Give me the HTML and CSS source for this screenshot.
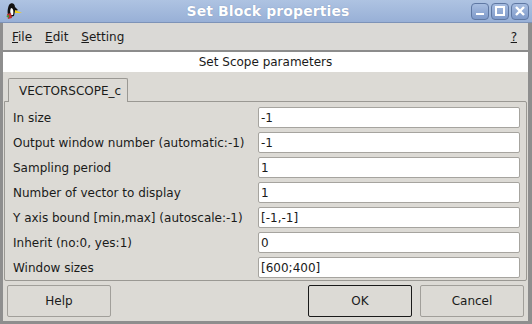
FILE: index.html
```html
<!DOCTYPE html>
<html lang="en">
<head>
    <meta charset="UTF-8">
    <title>Set Block properties</title>
    <link rel="stylesheet" href="styles.css">
</head>
<body>
    <div class="window">
        <div class="titlebar">
            <svg class="app-icon" width="20" height="18" viewBox="0 0 20 18">
                <path d="M6 3 C8 0 12 1 12 5 L15 8 L12 9 L11 14 L7 15 C4 13 4 8 6 3 Z" fill="#111"/>
                <path d="M8 6 C10 6 11 9 10 13 L8 13 C7 10 7 8 8 6 Z" fill="#fff"/>
                <path d="M12 8 L19 11 L12 11 Z" fill="#f0d020"/>
                <path d="M4 12 L8 11 L9 16 L5 17 Z" fill="#c03030"/>
                <path d="M3 14 L6 13 L6 16 Z" fill="#3a9a3a"/>
            </svg>
            <span class="title">Set Block properties</span>
            <div class="wm-buttons">
                <span class="wm-btn"><svg width="12" height="12" viewBox="0 0 12 12"><rect x="2" y="8" width="8" height="2" fill="#fff"/></svg></span>
                <span class="wm-btn"><svg width="12" height="12" viewBox="0 0 12 12"><rect x="2" y="2" width="8" height="8" fill="none" stroke="#fff" stroke-width="2"/></svg></span>
                <span class="wm-btn"><svg width="12" height="12" viewBox="0 0 12 12"><path d="M2 2 L10 10 M10 2 L2 10" stroke="#fff" stroke-width="2.4"/></svg></span>
            </div>
        </div>

        <div class="frame">
            <div class="menubar">
                <span class="menu"><u>F</u>ile</span>
                <span class="menu"><u>E</u>dit</span>
                <span class="menu"><u>S</u>etting</span>
                <span class="menu help"><u>?</u></span>
            </div>

            <div class="heading">Set Scope parameters</div>

            <div class="content">
                <div class="tabs">
                    <span class="tab">VECTORSCOPE_c</span>
                </div>
                <div class="panel">
                    <div class="row">
                        <label>In size</label>
                        <input type="text" value="-1">
                    </div>
                    <div class="row">
                        <label>Output window number (automatic:-1)</label>
                        <input type="text" value="-1">
                    </div>
                    <div class="row">
                        <label>Sampling period</label>
                        <input type="text" value="1">
                    </div>
                    <div class="row">
                        <label>Number of vector to display</label>
                        <input type="text" value="1">
                    </div>
                    <div class="row">
                        <label>Y axis bound [min,max] (autoscale:-1)</label>
                        <input type="text" value="[-1,-1]">
                    </div>
                    <div class="row">
                        <label>Inherit (no:0, yes:1)</label>
                        <input type="text" value="0">
                    </div>
                    <div class="row">
                        <label>Window sizes</label>
                        <input type="text" value="[600;400]">
                    </div>
                </div>

                <div class="buttons">
                    <button class="btn">Help</button>
                    <span class="spacer"></span>
                    <button class="btn default">OK</button>
                    <button class="btn">Cancel</button>
                </div>
            </div>
        </div>
    </div>
</body>
</html>
```

FILE: styles.css
```css
/* Page */
body {
    margin: 0;
    padding: 0;
    font-family: "DejaVu Sans", sans-serif;
    font-size: 12px;
    color: #1a1a1a;
    background-color: #dcdad5;
}

.window {
    width: 532px;
    height: 324px;
    display: flex;
    flex-direction: column;
    overflow: hidden;
}

/* Title bar */
.titlebar {
    height: 23px;
    display: flex;
    align-items: center;
    background: linear-gradient(#aec3e2, #98b0d7);
    border-bottom: 1px solid #7d93b8;
    box-sizing: border-box;
    padding: 0 3px 0 3px;
}

.app-icon {
    flex: none;
}

.title {
    flex: 1;
    text-align: center;
    font-weight: bold;
    font-size: 14px;
    color: #fff;
    text-shadow: 0 0 1px #6f86ad;
    letter-spacing: 0.1px;
    padding-left: 42px;
}

.wm-buttons {
    display: flex;
    gap: 2px;
}

.wm-btn {
    width: 18px;
    height: 17px;
    box-sizing: border-box;
    border: 1px solid #5f78a3;
    border-radius: 4px;
    background: linear-gradient(#a7bde0, #7f9aca);
    display: flex;
    align-items: center;
    justify-content: center;
}

/* Window body */
.frame {
    flex: 1;
    display: flex;
    flex-direction: column;
    border-left: 3px solid #8e8e8e;
    border-right: 4px solid #8e8e8e;
    border-bottom: 3px solid #8e8e8e;
    background-color: #dcdad5;
}

.menubar {
    height: 29px;
    display: flex;
    align-items: center;
    background-color: #dad9d6;
    border-bottom: 2px solid #8c8c8c;
    box-sizing: border-box;
    padding: 0 6px 0 9px;
    font-size: 12px;
}

.menu {
    margin-right: 13px;
}

.menu.help {
    margin-left: auto;
    margin-right: 5px;
}

.heading {
    height: 20px;
    line-height: 20px;
    background-color: #fff;
    text-align: center;
    font-size: 12px;
}

.content {
    flex: 1;
    padding: 5px 1px 0 1px;
}

/* Tabs */
.tabs {
    display: flex;
    padding-left: 4px;
}

.tab {
    width: 120px;
    height: 24px;
    line-height: 24px;
    box-sizing: border-box;
    border: 1px solid #9a9893;
    border-bottom: none;
    border-radius: 2px 2px 0 0;
    padding-left: 10px;
    background-color: #dcdad5;
    position: relative;
    top: 1px;
}

.panel {
    border: 1px solid #9a9893;
    border-radius: 0 2px 2px 2px;
    padding: 3px 6px 0 8px;
}

.row {
    display: flex;
    align-items: center;
    height: 25px;
}

.row label {
    width: 245px;
    flex: none;
}

.row input {
    flex: 1;
    height: 21px;
    box-sizing: border-box;
    border: 1px solid #a6a49f;
    border-radius: 2px;
    padding: 0 2px;
    font-family: "DejaVu Sans", sans-serif;
    font-size: 12px;
    color: #1a1a1a;
    background-color: #fff;
}

/* Buttons */
.buttons {
    display: flex;
    padding: 4px 3px 0 3px;
    gap: 8px;
}

.spacer {
    flex: 1;
}

.btn {
    width: 104px;
    height: 32px;
    font-family: "DejaVu Sans", sans-serif;
    font-size: 12px;
    color: #1a1a1a;
    background-color: #dcdad5;
    border: 1px solid #a19f9a;
    border-radius: 2px;
}

.btn.default {
    border-color: #1a1a1a;
}
```
